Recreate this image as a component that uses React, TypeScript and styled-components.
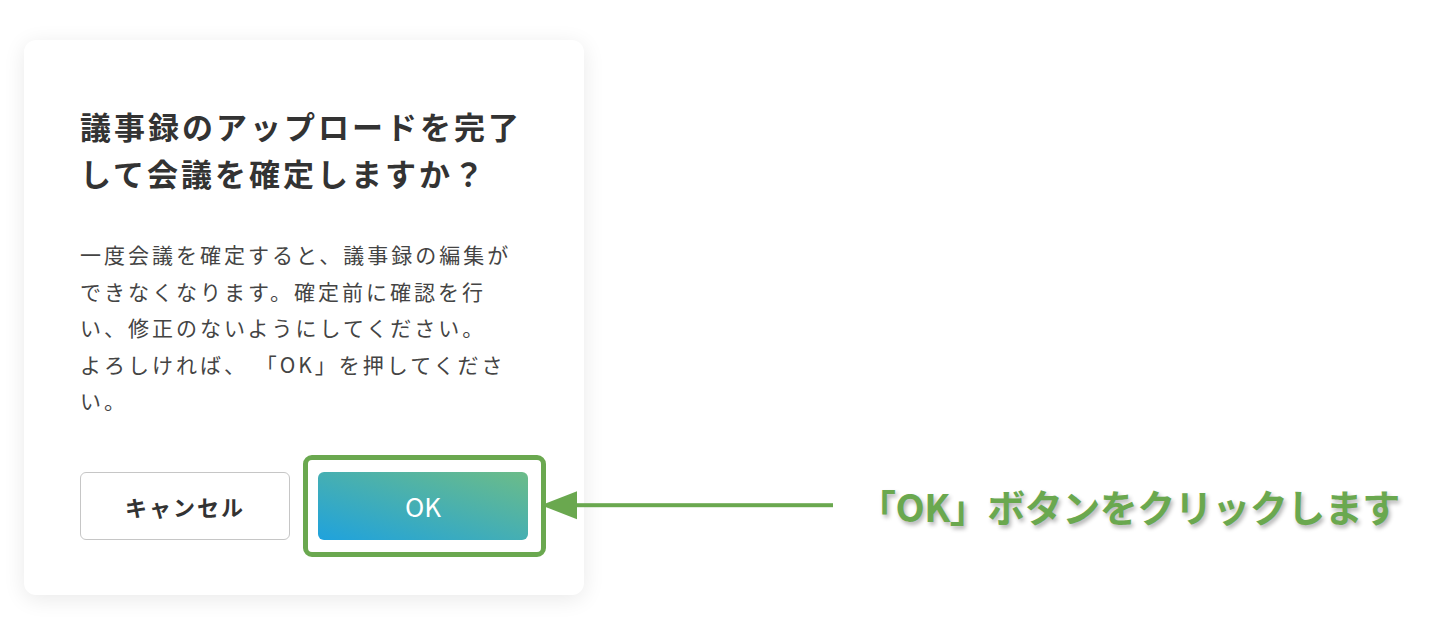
import styled, { createGlobalStyle } from "styled-components";

const GlobalStyle = createGlobalStyle`
  html, body {
    margin: 0;
    padding: 0;
    background: #ffffff;
  }
  body {
    font-family: "Noto Sans CJK JP", "Noto Sans", sans-serif;
    -webkit-font-smoothing: antialiased;
  }
`;

const GREEN = "#6aa84f";

export default function App() {
  return (
    <>
      <GlobalStyle />
      <Page>
        <Dialog>
          <Title>議事録のアップロードを完了して会議を確定しますか？</Title>
          <Message>
            一度会議を確定すると、議事録の編集ができなくなります。確定前に確認を行い、修正のないようにしてください。
            <br />
            よろしければ、 「OK」を押してください。
          </Message>
          <Actions>
            <CancelButton>キャンセル</CancelButton>
            <OkSlot>
              <OkButton>OK</OkButton>
              <Highlight>
                <Callout>
                  <ArrowIcon />
                  <CalloutText>「OK」ボタンをクリックします</CalloutText>
                </Callout>
              </Highlight>
            </OkSlot>
          </Actions>
        </Dialog>
      </Page>
    </>
  );
}

const ArrowIcon = () => (
  <svg width="292" height="30" viewBox="0 0 292 30">
    <polygon points="0,15 36,1 36,29" fill={GREEN} />
    <rect x="34" y="13" width="258" height="4" fill={GREEN} />
  </svg>
);

const Page = styled.div`
  padding: 40px 0 0 24px;
  min-height: 643px;
  box-sizing: border-box;
`;

const Dialog = styled.div`
  width: 560px;
  box-sizing: border-box;
  padding: 62px 56px 55px;
  background: #fff;
  border-radius: 12px;
  box-shadow: 0 4px 22px rgba(0, 0, 0, 0.09);
`;

const Title = styled.h2`
  margin: 0;
  font-size: 31px;
  line-height: 47px;
  font-weight: 700;
  letter-spacing: 3px;
  color: #333;
`;

const Message = styled.p`
  margin: 40px 0 0;
  font-size: 21px;
  line-height: 36.5px;
  letter-spacing: 3px;
  color: #444;
`;

const Actions = styled.div`
  display: grid;
  grid-template-columns: minmax(0, 1fr) minmax(0, 1fr);
  gap: 28px;
  margin-top: 53px;
`;

const ButtonBase = styled.button`
  width: 100%;
  height: 68px;
  padding: 0;
  box-sizing: border-box;
  border-radius: 6px;
  font-family: inherit;
  cursor: pointer;
`;

const CancelButton = styled(ButtonBase)`
  background: #fff;
  border: 1px solid #c6c6c6;
  color: #333;
  font-size: 22px;
  font-weight: 700;
  letter-spacing: 2px;
`;

const OkSlot = styled.div`
  position: relative;
`;

const OkButton = styled(ButtonBase)`
  border: none;
  color: #fff;
  font-size: 26px;
  font-weight: 400;
  background: linear-gradient(to top right, #1fa2dd, #6cbc88);
`;

const Highlight = styled.div`
  position: absolute;
  top: -17px;
  bottom: -17px;
  left: -15px;
  right: -18px;
  border: 5px solid ${GREEN};
  border-radius: 9px;
  pointer-events: none;
`;

const Callout = styled.div`
  position: absolute;
  left: 100%;
  top: 50%;
  transform: translateY(-50%);
  display: flex;
  align-items: center;
  gap: 25px;
  white-space: nowrap;
`;

const CalloutText = styled.span`
  font-size: 38px;
  line-height: 1.2;
  font-weight: 700;
  color: ${GREEN};
  letter-spacing: -0.5px;
  text-shadow: 2px 3px 4px rgba(0, 0, 0, 0.3);
`;
